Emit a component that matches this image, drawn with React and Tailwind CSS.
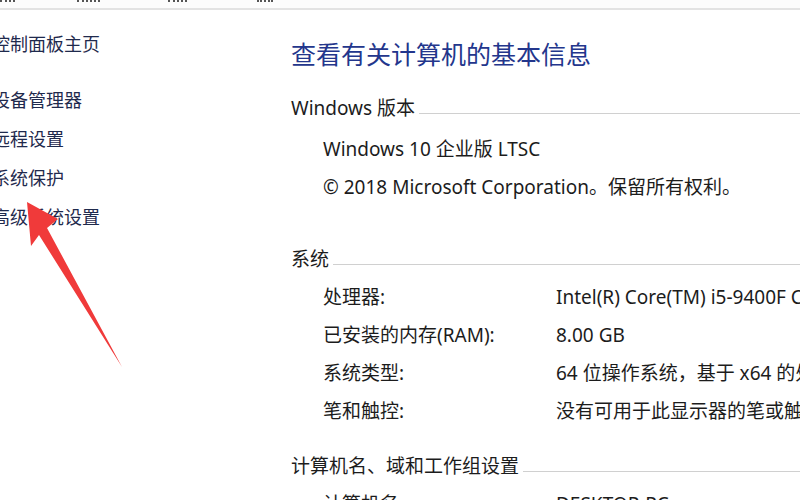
const navItems = [
  { label: '控制面板主页', gap: 'mt-[22px]' },
  { label: '设备管理器', gap: 'mt-[32px]' },
  { label: '远程设置', gap: 'mt-[15px]' },
  { label: '系统保护', gap: 'mt-[15px]' },
  { label: '高级系统设置', gap: 'mt-[15px]' },
];

const systemRows = [
  ['处理器:', 'Intel(R) Core(TM) i5-9400F CPU @ 2.90GHz'],
  ['已安装的内存(RAM):', '8.00 GB'],
  ['系统类型:', '64 位操作系统，基于 x64 的处理器'],
  ['笔和触控:', '没有可用于此显示器的笔或触控输入'],
];

const SectionHeader = ({ text }) => (
  <div className="flex h-[38px] items-center">
    <span className="whitespace-nowrap">{text}</span>
    <div className="ml-1 mt-[10px] h-px flex-1 bg-[#d0d0d0]" />
  </div>
);

const Arrow = () => (
  <svg
    className="pointer-events-none absolute left-0 top-0"
    width="140"
    height="370"
    viewBox="0 0 140 370"
  >
    <polygon
      points="27,192 58,209 47,218 122,357 39,225 31,236"
      fill="#f03a3a"
    />
  </svg>
);

const App = () => {
  return (
    <div
      className="relative h-[500px] w-[800px] overflow-hidden bg-white text-[19px] text-[#1c1c1c]"
      style={{ fontFamily: '"Noto Sans", "Noto Sans CJK SC", sans-serif' }}
    >
      <div className="flex h-[10px] items-start border-b-2 border-[#e3e3e3] bg-[#fcfcfc]">
        <div className="ml-0 w-[15px] border-t-2 border-dotted border-[#555]" />
        <div className="ml-[62px] w-[23px] border-t-2 border-dotted border-[#555]" />
        <div className="ml-[68px] w-[19px] border-t-2 border-dotted border-[#555]" />
        <div className="ml-[70px] w-[16px] border-t-2 border-dotted border-[#555]" />
      </div>

      <div className="flex">
        <aside className="relative w-[270px] shrink-0">
          <nav className="ml-[-8px] flex flex-col text-[18px] text-[#1f2a4d]">
            {navItems.map((item) => (
              <span
                key={item.label}
                className={`${item.gap} h-[24px] whitespace-nowrap leading-[24px]`}
              >
                {item.label}
              </span>
            ))}
          </nav>
          <Arrow />
        </aside>

        <main className="min-w-0 flex-1 pl-[21px]">
          <h1 className="mt-[26px] flex h-[38px] items-center whitespace-nowrap text-[25px] text-[#23368c]">
            查看有关计算机的基本信息
          </h1>

          <div className="mt-[15px]">
            <SectionHeader text="Windows 版本" />
          </div>
          <div className="mt-[3px] pl-[32px]">
            <div className="flex h-[38px] items-center whitespace-nowrap">
              Windows 10 企业版 LTSC
            </div>
            <div className="flex h-[38px] items-center whitespace-nowrap">
              © 2018 Microsoft Corporation。保留所有权利。
            </div>
          </div>

          <div className="mt-[34px]">
            <SectionHeader text="系统" />
          </div>
          <div className="pl-[32px]">
            {systemRows.map(([label, value]) => (
              <div key={label} className="flex h-[38px] items-center whitespace-nowrap">
                <span className="w-[233px] shrink-0">{label}</span>
                <span>{value}</span>
              </div>
            ))}
          </div>

          <div className="mt-[17px]">
            <SectionHeader text="计算机名、域和工作组设置" />
          </div>
          <div className="pl-[32px]">
            <div className="flex h-[38px] items-center whitespace-nowrap">
              <span className="w-[233px] shrink-0">计算机名:</span>
              <span>DESKTOP-PC</span>
            </div>
          </div>
        </main>
      </div>
    </div>
  );
};

export default App;
